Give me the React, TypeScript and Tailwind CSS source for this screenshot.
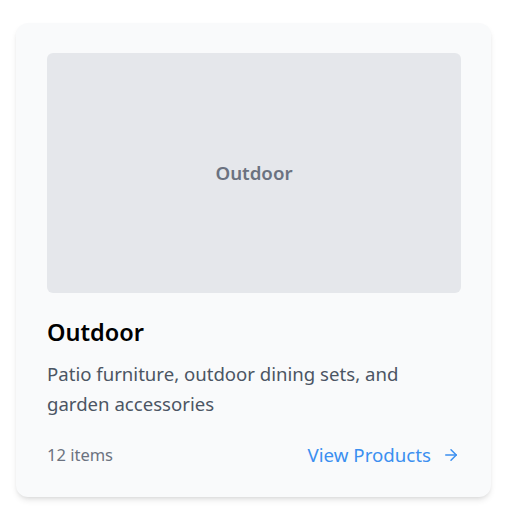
import React from "react";

export default function App() {
  return (
    <div className="w-[515px] h-[532px] bg-white" style={{ fontFamily: '"Noto Sans", "Open Sans", sans-serif' }}>
      <div className="pt-[23px] pl-[16px]">
        <div className="w-[475px] h-[474px] bg-[#f9fafb] rounded-xl shadow-md pt-[30px] pr-[30px] pb-[28px] pl-[31px] flex flex-col">
          <div className="w-[414px] h-[240px] bg-[#e5e7eb] rounded-md flex items-center justify-center">
            <span className="text-[18.7px] font-semibold text-[#6b7280]">Outdoor</span>
          </div>
          <h2 className="mt-[24px] text-[23.5px] leading-[30px] font-semibold text-black">Outdoor</h2>
          <p className="mt-[12px] text-[18.6px] leading-[30px] text-[#4b5563] w-[390px]">
            Patio furniture, outdoor dining sets, and garden accessories
          </p>
          <div className="mt-auto flex items-center justify-between pr-[1px]">
            <span className="text-[16.5px] text-[#6b7280]">12 items</span>
            <a className="flex items-center gap-[11px] text-[18.7px] text-[#3b8ff0]">
              View Products
              <svg width="18" height="18" viewBox="0 0 24 24" fill="none" stroke="currentColor" strokeWidth="2" strokeLinecap="round" strokeLinejoin="round">
                <path d="M5 12h14" />
                <path d="M12 5l7 7-7 7" />
              </svg>
            </a>
          </div>
        </div>
      </div>
    </div>
  );
}
